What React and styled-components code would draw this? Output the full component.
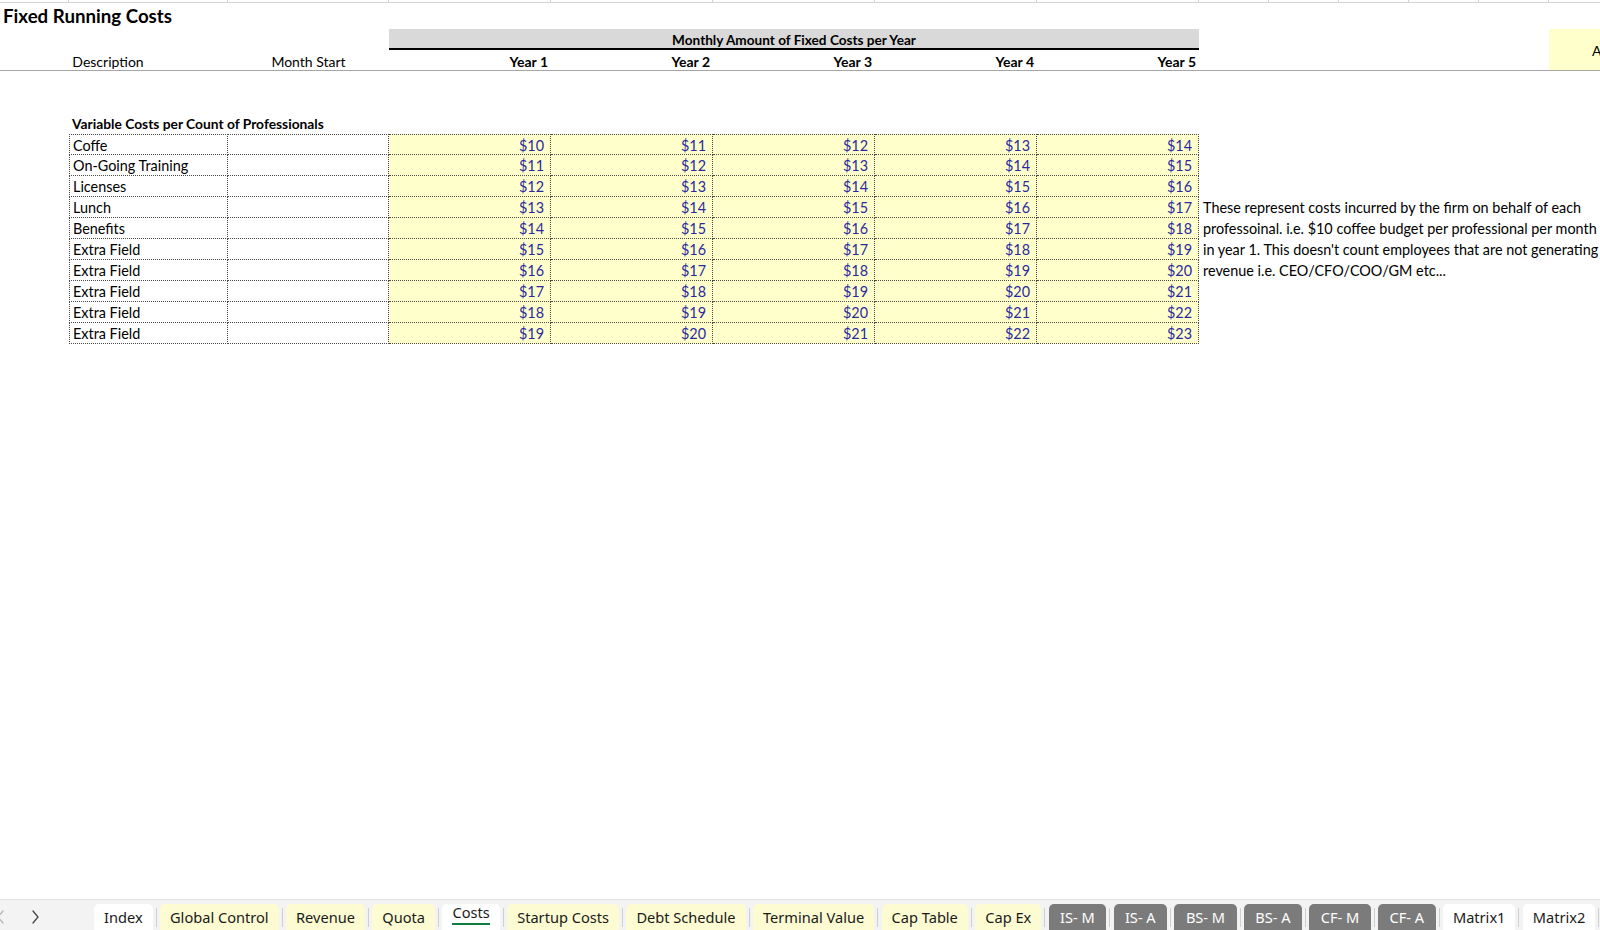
import React from 'react';
import styled, { createGlobalStyle } from 'styled-components';

const GlobalStyle = createGlobalStyle`
  html, body {
    margin: 0;
    padding: 0;
    background: #fff;
    overflow: hidden;
  }
  body {
    font-family: Lato, "Noto Sans", sans-serif;
    color: #000;
  }
`;

const COLS = '69px 159px 161px repeat(5, 162px) repeat(6, 70px)';

const rows = [
  ['Coffe', 10],
  ['On-Going Training', 11],
  ['Licenses', 12],
  ['Lunch', 13],
  ['Benefits', 14],
  ['Extra Field', 15],
  ['Extra Field', 16],
  ['Extra Field', 17],
  ['Extra Field', 18],
  ['Extra Field', 19],
];

const notes = [
  null,
  null,
  null,
  'These represent costs incurred by the firm on behalf of each',
  'professoinal. i.e. $10 coffee budget per professional per month',
  "in year 1. This doesn't count employees that are not generating",
  'revenue i.e. CEO/CFO/COO/GM etc...',
];

const tabs = [
  { name: 'Index', kind: 'white' },
  { name: 'Global Control', kind: 'yellow' },
  { name: 'Revenue', kind: 'yellow' },
  { name: 'Quota', kind: 'yellow' },
  { name: 'Costs', kind: 'active' },
  { name: 'Startup Costs', kind: 'yellow' },
  { name: 'Debt Schedule', kind: 'yellow' },
  { name: 'Terminal Value', kind: 'yellow' },
  { name: 'Cap Table', kind: 'yellow' },
  { name: 'Cap Ex', kind: 'yellow' },
  { name: 'IS- M', kind: 'dark' },
  { name: 'IS- A', kind: 'dark' },
  { name: 'BS- M', kind: 'dark' },
  { name: 'BS- A', kind: 'dark' },
  { name: 'CF- M', kind: 'dark' },
  { name: 'CF- A', kind: 'dark' },
  { name: 'Matrix1', kind: 'white' },
  { name: 'Matrix2', kind: 'white' },
];

const Page = styled.div`
  width: 1600px;
  height: 930px;
  display: flex;
  flex-direction: column;
  overflow: hidden;
`;

const Sheet = styled.div`
  flex: 1;
  overflow: hidden;
`;

const GridRow = styled.div`
  display: grid;
  grid-template-columns: ${COLS};
  height: ${p => p.$h}px;
`;

const FrozenCell = styled.div`
  border-right: 1px solid #d4d4d4;
  border-bottom: 1px solid #d4d4d4;
`;

const Title = styled.div`
  grid-column: 1 / 5;
  font-weight: 700;
  font-size: 18.7px;
  padding-left: 3px;
  line-height: 26px;
  white-space: nowrap;
`;

const Header = styled.div`
  display: grid;
  grid-template-columns: ${COLS};
  grid-template-rows: 21px 20px;
  border-bottom: 1px solid #a6a6a6;
`;

const Band = styled.div`
  grid-column: 4 / 9;
  grid-row: 1;
  background: #d9d9d9;
  border-bottom: 2px solid #000;
  font-weight: 700;
  font-size: 13.6px;
  text-align: center;
  line-height: 22px;
`;

const HeadLabel = styled.div`
  grid-row: 2;
  grid-column: ${p => p.$col};
  font-size: 14px;
  font-weight: ${p => (p.$bold ? 700 : 400)};
  text-align: ${p => p.$align || 'center'};
  padding: ${p => p.$pad || '0'};
  line-height: 23px;
  white-space: nowrap;
`;

const InputCorner = styled.div`
  grid-column: 14;
  grid-row: 1 / 3;
  background: #ffffcc;
  font-size: 14px;
  padding-top: 13px;
  padding-left: 43px;
  overflow: hidden;
`;

const Spacer = styled.div`
  height: ${p => p.$h}px;
`;

const SectionLabel = styled.div`
  grid-column: 2 / 6;
  font-weight: 700;
  font-size: 13.8px;
  padding-left: 3px;
  line-height: 21px;
  white-space: nowrap;
`;

const Table = styled.div`
  display: flex;
  flex-direction: column;
`;

const Cell = styled.div`
  grid-column: ${p => p.$col};
  background: ${p => (p.$input ? '#ffffcc' : '#fff')};
  color: ${p => (p.$input ? '#2a2a9e' : '#000')};
  text-align: ${p => (p.$input ? 'right' : 'left')};
  font-size: 14.4px;
  line-height: 21px;
  padding: 0 6px 0 3px;
  border-right: 1px dotted #4a4a4a;
  border-bottom: 1px dotted #4a4a4a;
  border-top: ${p => (p.$first ? '1px dotted #4a4a4a' : 'none')};
  border-left: ${p => (p.$col === 2 ? '1px dotted #4a4a4a' : 'none')};
  white-space: nowrap;
  overflow: hidden;
`;

const Note = styled.div`
  grid-column: 9 / 15;
  font-size: 14.4px;
  line-height: 21px;
  padding-left: 4px;
  white-space: nowrap;
  overflow: hidden;
`;

const TabBar = styled.div`
  height: 30px;
  flex-shrink: 0;
  background: #f3f3f3;
  border-top: 1px solid #e2e2e2;
  display: flex;
  align-items: flex-end;
  font-family: "Noto Sans", "Open Sans", sans-serif;
  overflow: hidden;
`;

const Nav = styled.div`
  flex-shrink: 0;
  width: 98px;
  height: 26px;
  display: flex;
  align-items: center;
  gap: 26px;
  margin-left: -4px;
  svg {
    width: 9px;
    height: 14px;
  }
`;

const Tab = styled.div`
  flex-shrink: 0;
  position: relative;
  height: 26px;
  margin-right: 7.4px;
  padding: 0 ${p => (p.$kind === 'dark' ? 11.4 : 10)}px;
  border-radius: 5px 5px 0 0;
  display: flex;
  align-items: center;
  font-size: 14.6px;
  white-space: nowrap;
  background: ${p =>
    p.$kind === 'yellow' ? '#fdfbd2' : p.$kind === 'dark' ? '#7b7b7b' : '#fff'};
  color: ${p => (p.$kind === 'dark' ? '#fff' : '#1a1a1a')};
  &:after {
    content: '';
    position: absolute;
    right: -4px;
    top: 4px;
    height: 19px;
    border-right: 1px solid #cfcfcf;
  }
`;

const ActiveLabel = styled.span`
  display: inline-block;
  margin-top: -6px;
  padding-bottom: 2px;
  border-bottom: 2px solid #107c41;
  line-height: 18px;
`;

const Chevron = ({ dir, color }) => (
  <svg viewBox="0 0 9 14" fill="none" stroke={color} strokeWidth="1.3" strokeLinecap="round">
    <path d={dir === 'left' ? 'M7 1 L2 7 L7 13' : 'M2 1 L7 7 L2 13'} />
  </svg>
);

const App = () => {
  const years = [1, 2, 3, 4, 5];
  return (
    <Page>
      <GlobalStyle />
      <Sheet>
        <GridRow $h={3}>
          {Array.from({ length: 14 }).map((_, i) => (
            <FrozenCell key={i} />
          ))}
        </GridRow>
        <GridRow $h={26}>
          <Title>Fixed Running Costs</Title>
        </GridRow>
        <Header>
          <Band>Monthly Amount of Fixed Costs per Year</Band>
          <HeadLabel $col="1 / 3" $pad="0 12px 0 0">Description</HeadLabel>
          <HeadLabel $col="3">Month Start</HeadLabel>
          {years.map(y => (
            <HeadLabel key={y} $col={3 + y} $bold $align="right" $pad="0 3px 0 0">
              Year {y}
            </HeadLabel>
          ))}
          <InputCorner>A</InputCorner>
        </Header>
        <Spacer $h={42} />
        <GridRow $h={21}>
          <SectionLabel>Variable Costs per Count of Professionals</SectionLabel>
        </GridRow>
        <Table>
          {rows.map(([label, base], i) => (
            <GridRow key={i} $h={21}>
              <Cell $col={2} $first={i === 0}>{label}</Cell>
              <Cell $col={3} $first={i === 0} />
              {years.map(y => (
                <Cell key={y} $col={3 + y} $input $first={i === 0}>
                  ${base + y - 1}
                </Cell>
              ))}
              {notes[i] && <Note>{notes[i]}</Note>}
            </GridRow>
          ))}
        </Table>
      </Sheet>
      <TabBar>
        <Nav>
          <Chevron dir="left" color="#b5b5b5" />
          <Chevron dir="right" color="#444" />
        </Nav>
        {tabs.map(t => (
          <Tab key={t.name} $kind={t.kind}>
            {t.kind === 'active' ? <ActiveLabel>{t.name}</ActiveLabel> : t.name}
          </Tab>
        ))}
      </TabBar>
    </Page>
  );
};

export default App;
